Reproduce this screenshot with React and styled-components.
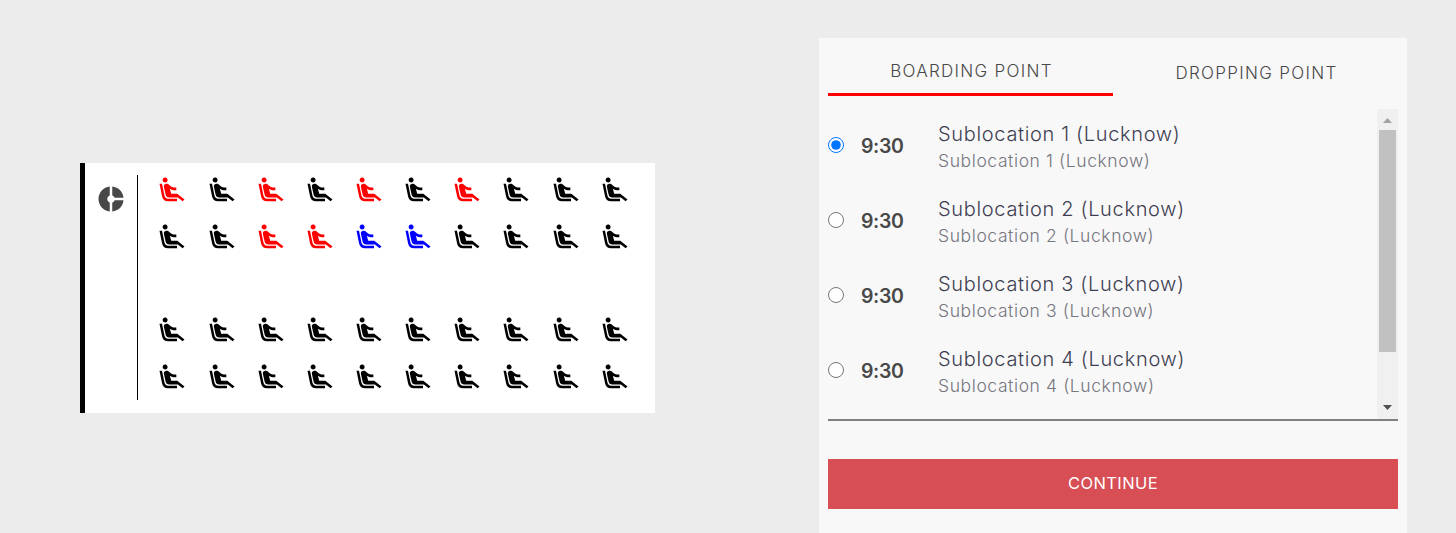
import React, { useState } from "react";
import styled, { createGlobalStyle } from "styled-components";
import { MdAirlineSeatReclineExtra, MdDonutSmall } from "react-icons/md";

const GlobalStyle = createGlobalStyle`
  * { box-sizing: border-box; }
  body {
    margin: 0;
    background: #ececec;
    font-family: Inter, "Liberation Sans", sans-serif;
    color: #484848;
    overflow: hidden;
  }
`;

const Page = styled.main`
  display: flex;
  justify-content: space-between;
  align-items: flex-start;
  height: 533px;
  padding: 38px 49px 0 80px;
`;

const Bus = styled.section`
  display: flex;
  width: 575px;
  height: 250px;
  margin-top: 125px;
  padding: 12px 0 13px;
  border-left: 5px solid #000;
  background: #fff;
`;

const Driver = styled.div`
  width: 53px;
  padding: 9px 0 0 11px;
  border-right: 1px solid #000;
  svg { display: block; }
`;

const Seats = styled.div`
  display: flex;
  flex-direction: column;
  padding-left: 19.4px;
`;

const SeatRow = styled.div`
  display: grid;
  flex-shrink: 0;
  grid-template-columns: repeat(10, 49.17px);
  height: 47px;
  margin-bottom: ${(p) => (p.$aisle ? "46px" : "0")};
`;

const Seat = styled(MdAirlineSeatReclineExtra)`
  display: block;
  color: ${(p) => p.color};
`;

const Panel = styled.section`
  width: 588px;
  height: 495px;
  padding: 0 9px;
  background: #f8f8f8;
`;

const Tabs = styled.div`
  display: flex;
  height: 58px;
`;

const Tab = styled.div`
  flex: 1;
  display: flex;
  align-items: center;
  justify-content: center;
  padding-top: ${(p) => (p.$active ? "10px" : "11px")};
  padding-left: 2px;
  border-bottom: ${(p) => (p.$active ? "3px solid #f00" : "0")};
  font-size: 17px;
  font-weight: 300;
  letter-spacing: 1.3px;
  cursor: pointer;
`;

const ListFrame = styled.div`
  display: flex;
  height: 312px;
  margin-top: 13px;
  border-bottom: 2px solid #808080;
`;

const List = styled.div`
  flex: 1;
  padding-top: 12px;
`;

const Point = styled.label`
  display: flex;
  height: 75px;
`;

const Radio = styled.input`
  width: 16px;
  height: 16px;
  margin: 16px 17px 0 0;
`;

const Time = styled.span`
  width: 77px;
  padding-top: 13px;
  font-size: 19.5px;
  line-height: 24px;
  font-weight: 600;
  letter-spacing: -0.4px;
`;

const Place = styled.div`
  display: flex;
  flex-direction: column;
  white-space: nowrap;
`;

const Name = styled.span`
  font-size: 20px;
  line-height: 26px;
  font-weight: 300;
  letter-spacing: 0.67px;
  color: #3e3e52;
`;

const Address = styled.span`
  font-size: 17.5px;
  line-height: 28px;
  font-weight: 300;
  letter-spacing: 0.6px;
  color: #76767e;
`;

const ScrollTrack = styled.div`
  display: flex;
  flex-direction: column;
  align-items: center;
  width: 21px;
  background: #f0f0f0;
`;

const ScrollArrow = styled.svg`
  display: block;
  width: 9px;
  height: 5px;
  margin: ${(p) => (p.$up ? "9px 0 7px" : "auto 0 9px")};
  fill: ${(p) => (p.$up ? "#a3a3a3" : "#505050")};
`;

const ScrollThumb = styled.div`
  width: 17px;
  height: 222px;
  background: #c1c1c1;
`;

const Continue = styled.button`
  display: block;
  width: 100%;
  height: 50px;
  margin-top: 38px;
  padding: 0 0 3px;
  border: 0;
  background: #d74e55;
  color: #fff;
  font-family: inherit;
  font-size: 16.5px;
  font-weight: 400;
  letter-spacing: 0.4px;
`;

const SEAT_COLORS = { r: "#f00", k: "#000", b: "#00f" };
const ROWS = ["rkrkrkrkkk", "kkrrbbkkkk", "kkkkkkkkkk", "kkkkkkkkkk"];

export default function App() {
  const [selected, setSelected] = useState(1);
  return (
    <>
      <GlobalStyle />
      <Page>
        <Bus>
          <Driver>
            <MdDonutSmall size={30} color="#484848" />
          </Driver>
          <Seats>
            {ROWS.map((row, r) => (
              <SeatRow key={r} $aisle={r === 1}>
                {[...row].map((s, i) => (
                  <Seat key={i} size={30} color={SEAT_COLORS[s]} />
                ))}
              </SeatRow>
            ))}
          </Seats>
        </Bus>
        <Panel>
          <Tabs>
            <Tab $active>BOARDING POINT</Tab>
            <Tab>DROPPING POINT</Tab>
          </Tabs>
          <ListFrame>
            <List>
              {[1, 2, 3, 4].map((n) => (
                <Point key={n}>
                  <Radio
                    type="radio"
                    name="point"
                    checked={selected === n}
                    onChange={() => setSelected(n)}
                  />
                  <Time>9:30</Time>
                  <Place>
                    <Name>Sublocation {n} (Lucknow)</Name>
                    <Address>Sublocation {n} (Lucknow)</Address>
                  </Place>
                </Point>
              ))}
            </List>
            <ScrollTrack>
              <ScrollArrow $up viewBox="0 0 9 5">
                <path d="M0 5L4.5 0L9 5Z" />
              </ScrollArrow>
              <ScrollThumb />
              <ScrollArrow viewBox="0 0 9 5">
                <path d="M0 0L4.5 5L9 0Z" />
              </ScrollArrow>
            </ScrollTrack>
          </ListFrame>
          <Continue>CONTINUE</Continue>
        </Panel>
      </Page>
    </>
  );
}
